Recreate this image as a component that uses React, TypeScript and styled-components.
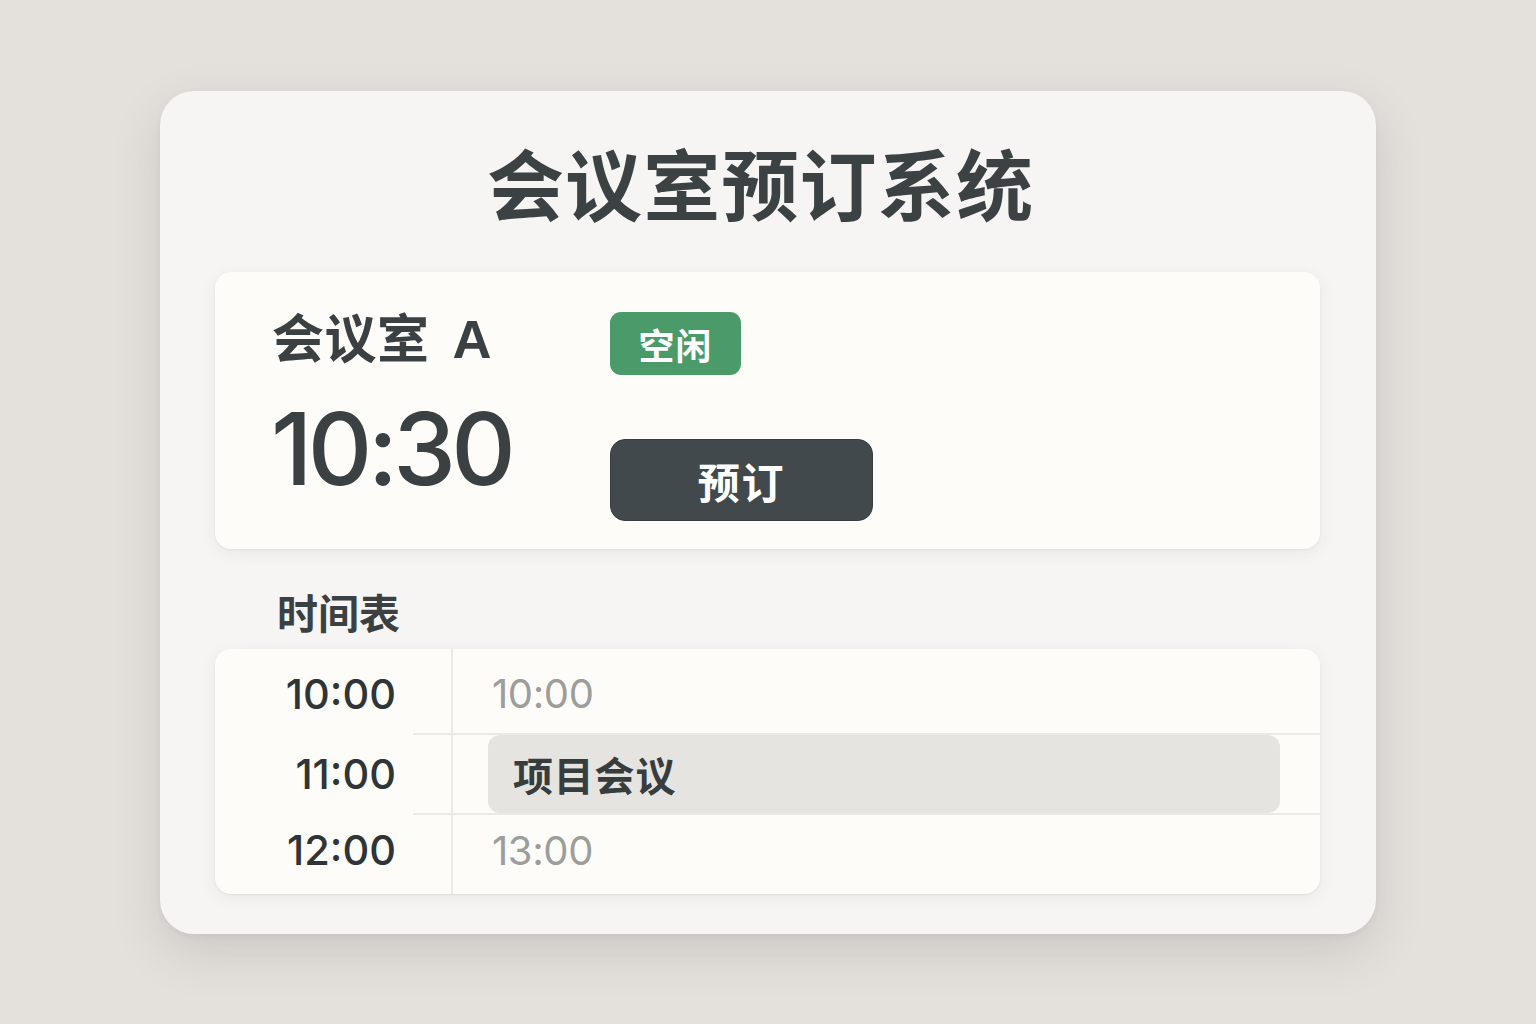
import React from "react";
import styled, { createGlobalStyle } from "styled-components";

const GlobalStyle = createGlobalStyle`
  html, body {
    margin: 0;
    padding: 0;
    background: #e4e1dd;
  }
  body {
    font-family: "Inter", "Noto Sans CJK SC", sans-serif;
    color: #3b4143;
  }
  * { box-sizing: border-box; }
`;

const Page = styled.div`
  width: 1536px;
  height: 1024px;
  padding: 91px 160px 0 160px;
`;

const Panel = styled.div`
  width: 1216px;
  height: 843px;
  background: #f6f5f3;
  border-radius: 34px;
  box-shadow: 0 18px 50px rgba(60, 50, 40, 0.14), 0 2px 6px rgba(60, 50, 40, 0.06);
  padding: 0 56px 0 55px;
  display: flex;
  flex-direction: column;
`;

const Title = styled.h1`
  margin: 0;
  height: 181px;
  display: flex;
  align-items: center;
  justify-content: center;
  padding-right: 14px;
  font-size: 77px;
  font-weight: 700;
  line-height: 1;
  color: #3c4244;
  font-family: "Noto Sans CJK SC", sans-serif;
  letter-spacing: 0.015em;
`;

const Card = styled.div`
  background: #fdfcf9;
  border-radius: 16px;
  box-shadow: 0 4px 16px rgba(60, 50, 40, 0.07), 0 1px 2px rgba(60, 50, 40, 0.06);
`;

const RoomCard = styled(Card)`
  height: 277px;
  padding: 40px 59px 0 59px;
  display: grid;
  grid-template-columns: 336px auto;
  grid-template-rows: 63px auto;
`;

const RoomName = styled.div`
  font-family: "Inter", "Noto Sans CJK SC", sans-serif;
  font-size: 52px;
  font-weight: 700;
  line-height: 63px;
  color: #3b4143;
  letter-spacing: 0.01em;
  margin-top: -4px;
  margin-left: -2px;
  white-space: pre;
`;

const RoomLetter = styled.span`
  font-family: "Liberation Sans", sans-serif;
  font-size: 54px;
  font-weight: 700;
  margin-left: 10px;
`;

const Badge = styled.div`
  justify-self: start;
  width: 131px;
  height: 63px;
  border-radius: 11px;
  background: #4b9a69;
  color: #ffffff;
  font-family: "Noto Sans CJK SC", sans-serif;
  font-size: 36px;
  font-weight: 700;
  display: flex;
  align-items: center;
  justify-content: center;
  letter-spacing: 0.03em;
`;

const BigTime = styled.div`
  font-family: "Inter", sans-serif;
  font-size: 100px;
  font-weight: 500;
  line-height: 1;
  color: #3b4143;
  letter-spacing: -0.047em;
  margin-top: 24px;
  margin-left: -3px;
`;

const BookButton = styled.button`
  justify-self: start;
  margin-top: 64px;
  width: 263px;
  height: 82px;
  border: 1px solid #363d40;
  border-radius: 15px;
  background: #42494c;
  color: #ffffff;
  font-family: "Noto Sans CJK SC", sans-serif;
  font-size: 42px;
  font-weight: 700;
  letter-spacing: 0.04em;
  padding: 0;
  cursor: pointer;
`;

const SectionLabel = styled.h2`
  margin: 0;
  height: 100px;
  display: flex;
  align-items: center;
  padding-left: 62px;
  padding-top: 24px;
  font-family: "Noto Sans CJK SC", sans-serif;
  font-size: 41px;
  font-weight: 700;
  color: #3b4143;
`;

const ScheduleCard = styled(Card)`
  display: grid;
  grid-template-columns: 238px 1fr;
  grid-template-rows: 85px 80px 80px;
  overflow: hidden;
`;

const shiftPadding = (s?: number) =>
  !s ? "" : s > 0 ? `padding-top: ${s * 2}px;` : `padding-bottom: ${-s * 2}px;`;

const HourCell = styled.div<{ $shift?: number }>`
  display: flex;
  align-items: center;
  justify-content: flex-end;
  padding-right: 55px;
  ${(p) => shiftPadding(p.$shift)}
  font-family: "Inter", sans-serif;
  font-size: 41.5px;
  font-weight: 500;
  color: #2f3436;
  border-right: 2px solid #ebe9e5;
  letter-spacing: 0;
`;

const SlotCell = styled.div<{ $divider?: boolean; $shift?: number }>`
  position: relative;
  display: flex;
  align-items: center;
  padding-left: 39px;
  padding-right: 40px;
  ${(p) => shiftPadding(p.$shift)}
  ${(p) =>
    p.$divider
      ? `
    &::before {
      content: "";
      position: absolute;
      top: -1px;
      left: -40px;
      right: 0;
      height: 2px;
      background: #ebe9e5;
    }
  `
      : ""}
`;

const SlotTime = styled.span`
  font-family: "Inter", sans-serif;
  font-size: 40px;
  font-weight: 400;
  color: #9d9d9b;
  letter-spacing: -0.01em;
`;

const EventBlock = styled.div`
  position: relative;
  z-index: 1;
  flex: 1;
  height: 78px;
  margin-left: -4px;
  background: #e6e4e1;
  border-radius: 12px;
  display: flex;
  align-items: center;
  padding-left: 25px;
  font-family: "Noto Sans CJK SC", sans-serif;
  font-size: 40px;
  font-weight: 700;
  color: #373c3e;
  letter-spacing: 0.02em;
`;

export default function App() {
  return (
    <>
      <GlobalStyle />
      <Page>
        <Panel>
          <Title>会议室预订系统</Title>
          <RoomCard>
            <RoomName>
              会议室 <RoomLetter>A</RoomLetter>
            </RoomName>
            <Badge>空闲</Badge>
            <BigTime>10:30</BigTime>
            <BookButton>预订</BookButton>
          </RoomCard>
          <SectionLabel>时间表</SectionLabel>
          <ScheduleCard>
            <HourCell $shift={2}>10:00</HourCell>
            <SlotCell $shift={2}>
              <SlotTime>10:00</SlotTime>
            </SlotCell>
            <HourCell>11:00</HourCell>
            <SlotCell $divider>
              <EventBlock>项目会议</EventBlock>
            </SlotCell>
            <HourCell $shift={-4}>12:00</HourCell>
            <SlotCell $divider $shift={-4}>
              <SlotTime>13:00</SlotTime>
            </SlotCell>
          </ScheduleCard>
        </Panel>
      </Page>
    </>
  );
}
